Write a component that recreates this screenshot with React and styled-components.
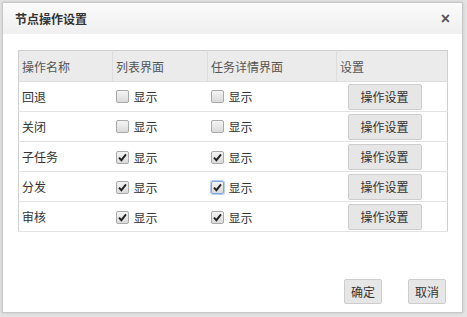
import React from 'react';
import styled, { createGlobalStyle } from 'styled-components';

const GlobalStyle = createGlobalStyle`
  html, body {
    margin: 0;
    padding: 0;
    background: #e4e4e4;
    font-family: "Noto Sans CJK SC", "Liberation Sans", sans-serif;
    font-size: 12px;
    color: #333;
  }
`;

const rows = [
  { name: '回退', list: false, detail: false },
  { name: '关闭', list: false, detail: false },
  { name: '子任务', list: true, detail: true },
  { name: '分发', list: true, detail: true, focus: true },
  { name: '审核', list: true, detail: true },
];

function Check({ checked, focus }) {
  return (
    <CheckLabel>
      <Box $focus={focus}>
        {checked && (
          <svg width="9" height="9" viewBox="0 0 9 9">
            <path d="M1 4.6 L3.4 7.2 L8 1.4" fill="none" stroke="#222" strokeWidth="1.9" />
          </svg>
        )}
      </Box>
      显示
    </CheckLabel>
  );
}

function App() {
  return (
    <>
      <GlobalStyle />
      <Page>
        <Dialog>
          <Header>
            <Title>节点操作设置</Title>
            <Close>×</Close>
          </Header>
          <Body>
            <Table>
              <colgroup>
                <col style={{ width: 94 }} />
                <col style={{ width: 95 }} />
                <col style={{ width: 129 }} />
                <col style={{ width: 111 }} />
              </colgroup>
              <thead>
                <tr>
                  <Th>操作名称</Th>
                  <Th>列表界面</Th>
                  <Th>任务详情界面</Th>
                  <Th $last>设置</Th>
                </tr>
              </thead>
              <tbody>
                {rows.map((r) => (
                  <Tr key={r.name}>
                    <Td>{r.name}</Td>
                    <Td><Check checked={r.list} /></Td>
                    <Td><Check checked={r.detail} focus={r.focus} /></Td>
                    <Td $btn><CellButton>操作设置</CellButton></Td>
                  </Tr>
                ))}
              </tbody>
            </Table>
          </Body>
          <Footer>
            <FooterButton>确定</FooterButton>
            <FooterButton>取消</FooterButton>
          </Footer>
        </Dialog>
      </Page>
    </>
  );
}

export default App;

const Page = styled.div`
  width: 467px;
  height: 317px;
  padding: 2px 0 0 2px;
  box-sizing: border-box;
  overflow: hidden;
`;

const Dialog = styled.div`
  width: 461px;
  height: 311px;
  box-sizing: border-box;
  border: 1px solid #c8c8c8;
  background: #fff;
  display: flex;
  flex-direction: column;
  box-shadow: 0 0 3px rgba(0, 0, 0, 0.15);
`;

const Header = styled.div`
  height: 31px;
  flex: none;
  display: flex;
  align-items: center;
  justify-content: space-between;
  padding: 0 12px 0 12px;
  background: linear-gradient(#fbfbfb, #efefef);
`;

const Title = styled.h3`
  margin: 0;
  font-size: 12px;
  font-weight: bold;
  color: #333;
`;

const Close = styled.span`
  font-family: "Liberation Sans", sans-serif;
  font-size: 16px;
  font-weight: bold;
  color: #555;
  line-height: 1;
`;

const Body = styled.div`
  flex: 1;
  padding: 16px 15px 0 15px;
`;

const Table = styled.table`
  width: 429px;
  border-collapse: collapse;
  table-layout: fixed;
  border: 1px solid #cfcfcf;
`;

const Th = styled.th`
  height: 30px;
  padding: 0 3px;
  text-align: left;
  font-weight: normal;
  color: #555;
  background: #ebebeb;
  border-right: ${({ $last }) => ($last ? 'none' : '1px solid #dcdcdc')};
  border-bottom: 1px solid #dedede;
`;

const Tr = styled.tr`
  border-bottom: 1px solid #e3e3e3;
`;

const Td = styled.td`
  height: 29px;
  padding: ${({ $btn }) => ($btn ? '0 0 0 11px' : '0 3px')};
  color: #333;
  white-space: nowrap;
`;

const CheckLabel = styled.label`
  display: inline-flex;
  align-items: center;
  gap: 5px;
`;

const Box = styled.span`
  width: 11px;
  height: 11px;
  display: inline-flex;
  align-items: center;
  justify-content: center;
  border: 1px solid ${({ $focus }) => ($focus ? '#7ea6e0' : '#a9a9a9')};
  border-radius: 2px;
  background: linear-gradient(#f4f4f4, #dadada);
  box-shadow: ${({ $focus }) => ($focus ? '0 0 0 1px #b7cdee' : 'none')};
`;

const CellButton = styled.button`
  width: 74px;
  height: 26px;
  font-family: inherit;
  font-size: 12px;
  color: #333;
  background: #e6e6e6;
  border: 1px solid #cdcdcd;
  border-radius: 2px;
  padding: 0;
  display: block;
`;

const Footer = styled.div`
  flex: none;
  display: flex;
  justify-content: flex-end;
  gap: 26px;
  padding: 0 16px 8px 0;
`;

const FooterButton = styled.button`
  height: 25px;
  width: 38px;
  padding: 0;
  font-family: inherit;
  font-size: 12px;
  color: #333;
  background: #e6e6e6;
  border: 1px solid #cdcdcd;
  border-radius: 2px;
`;
